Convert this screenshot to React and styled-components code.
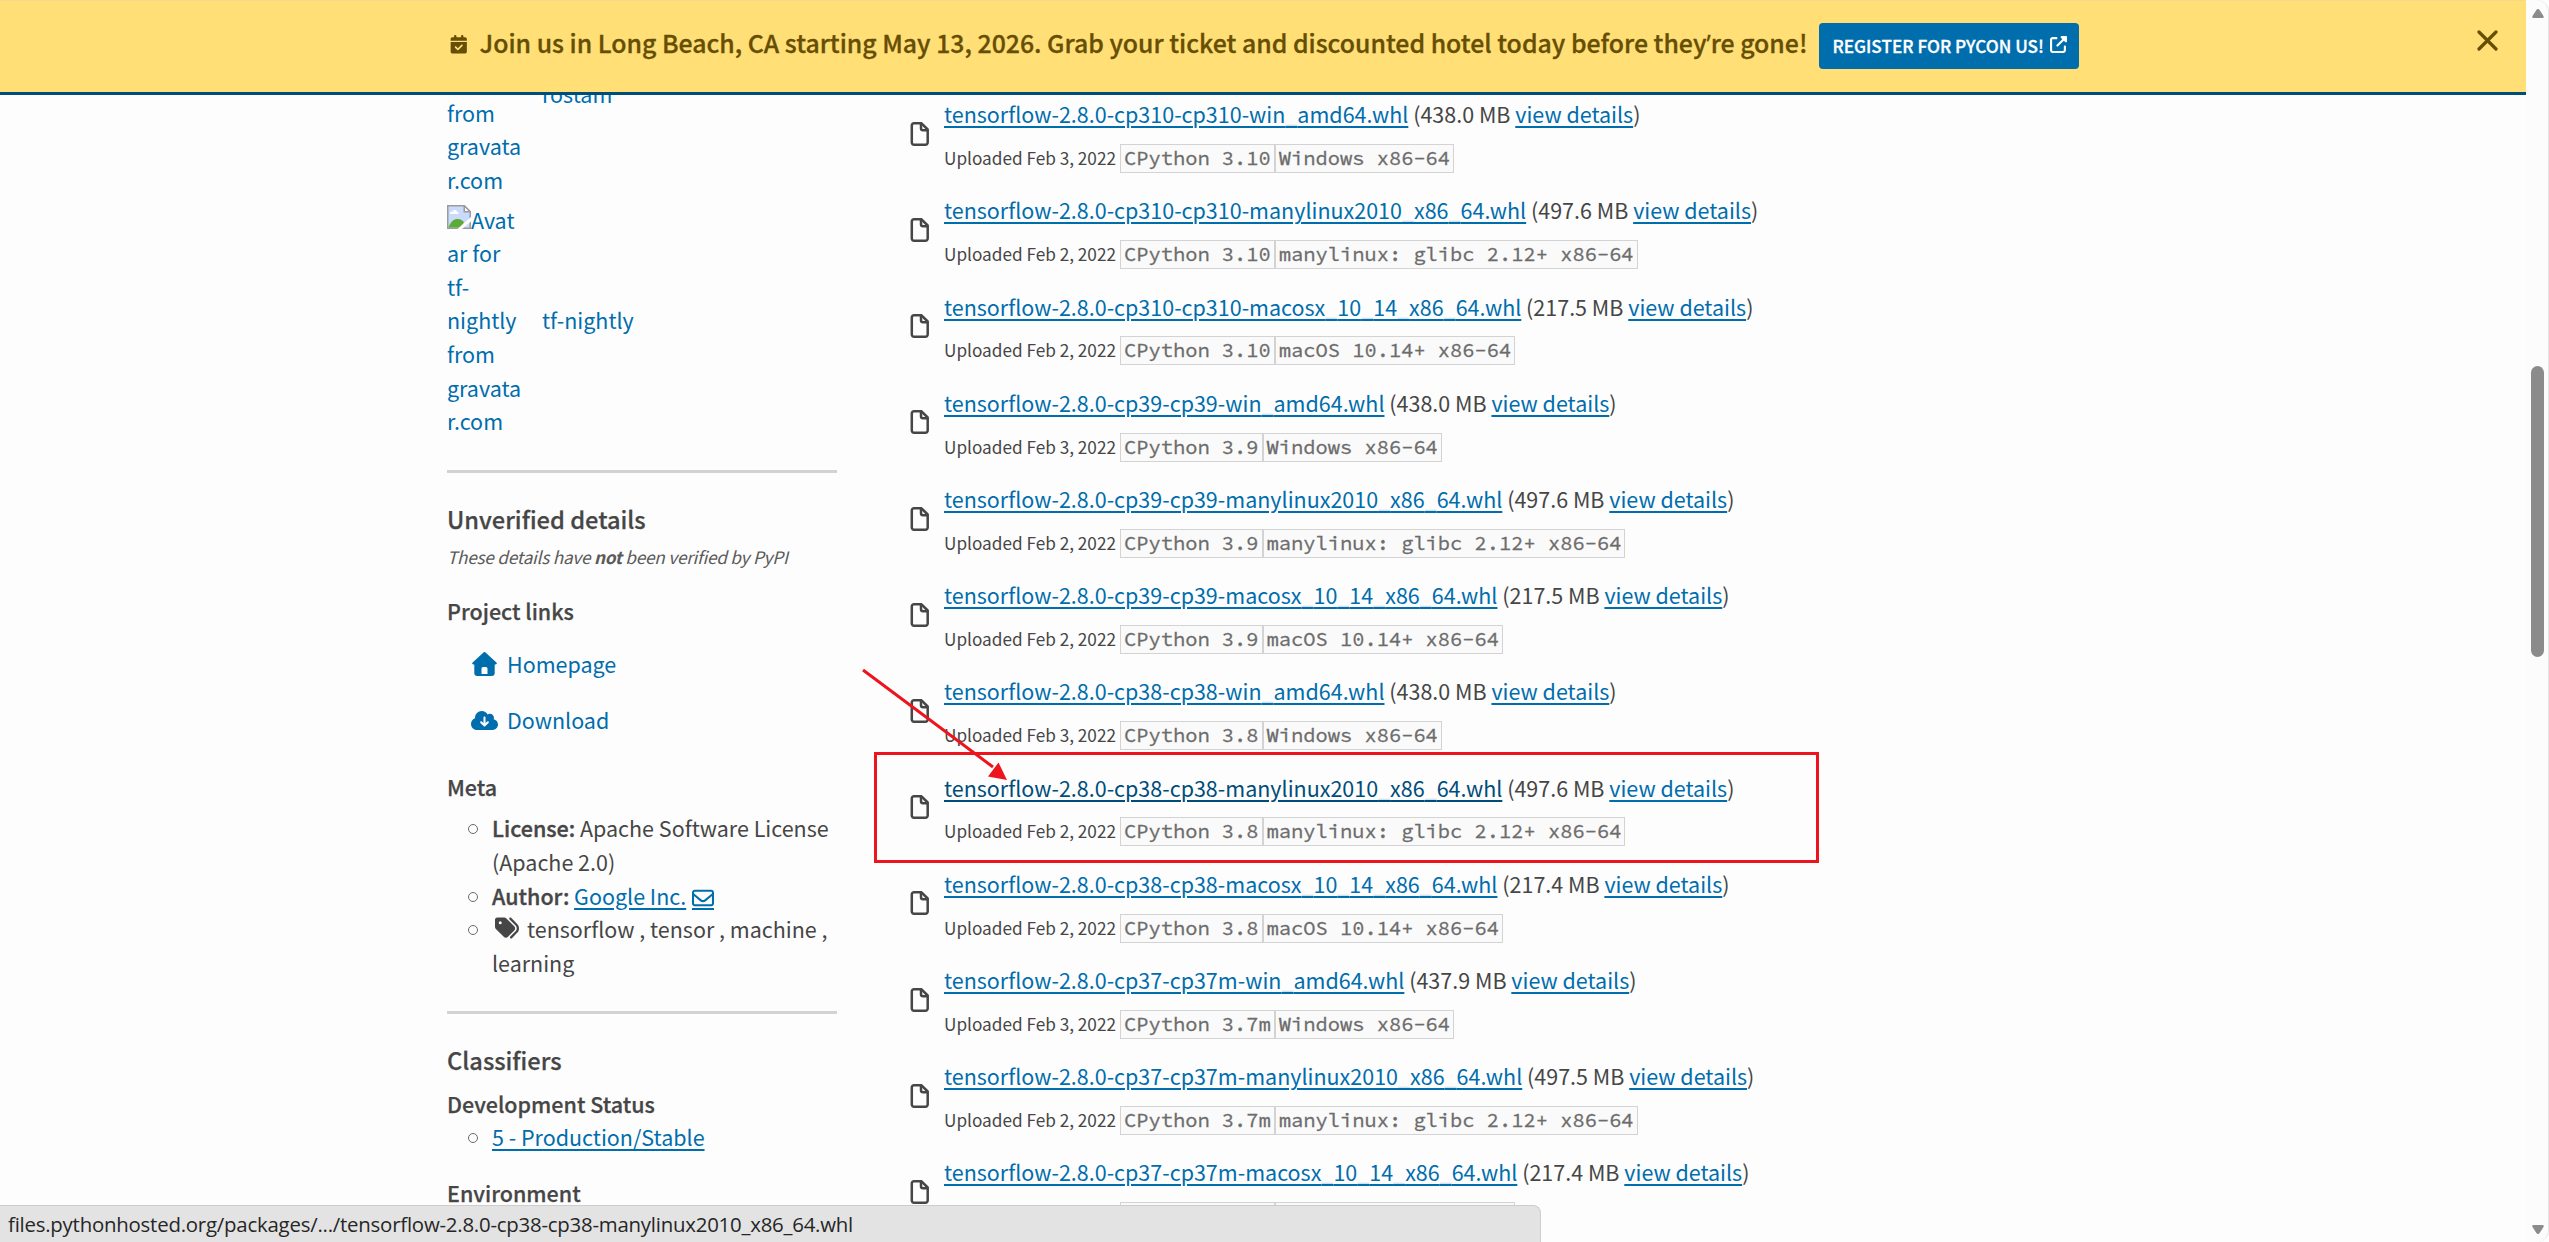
import React from 'react';
import styled, { createGlobalStyle } from 'styled-components';
import {
  FaCalendarCheck,
  FaUpRightFromSquare,
  FaCloudArrowDown,
  FaTags,
  FaRegEnvelope,
} from 'react-icons/fa6';

const sans = '"Noto Sans CJK SC", "Open Sans", sans-serif';
const mono = '"Source Code Pro", "Liberation Mono", monospace';
const blue = '#006dad';
const darkBlue = '#004d7a';
const ink = '#464646';

const Global = createGlobalStyle`
  *, *::before, *::after { box-sizing: border-box; }
  html, body { margin: 0; padding: 0; background: #fdfdfd; overflow: hidden; }
`;

const Browser = styled.div`
  position: relative;
  display: flex;
  width: 2549px;
  height: 1242px;
  overflow: hidden;
  background: #fdfdfd;
  color: ${ink};
  font-family: ${sans};
  font-size: 21.49px;
  line-height: 33.6px;
`;

const Page = styled.div`
  flex: 1;
  min-width: 0;
  display: flex;
  flex-direction: column;
`;

const Banner = styled.header`
  flex: none;
  height: 95px;
  padding: 0 28px 0 450px;
  display: flex;
  align-items: flex-start;
  background: #ffdf76;
  border-bottom: 3px solid ${darkBlue};
  box-shadow: inset 0 1px 0 #f3d98a;
  color: #664e04;
`;

const BannerIcon = styled.span`
  display: flex;
  margin: 35px 12px 0 0;
  font-size: 18.5px;
  svg { width: 17.5px; }
`;

const BannerText = styled.span`
  margin: 25px 12px 0 0;
  font-size: 24.84px;
  font-weight: 500;
  line-height: 34px;
  white-space: nowrap;
  -webkit-text-stroke: 0.3px currentColor;
`;

const Apostrophe = styled.span`
  font-family: "Open Sans", sans-serif;
`;

const BannerButton = styled.a`
  display: flex;
  align-items: center;
  gap: 6px;
  height: 46px;
  margin-top: 23px;
  padding: 0 12px 0 13px;
  border-radius: 4px;
  background: ${blue};
  color: #fff;
  font-size: 17.19px;
  font-weight: 500;
  white-space: nowrap;
  -webkit-text-stroke: 0.3px currentColor;
  svg { width: 17px; height: 17px; margin-top: -3px; }
`;

const CloseButton = styled.button`
  display: flex;
  margin: 30px 0 0 auto;
  padding: 0;
  border: 0;
  background: none;
  color: inherit;
`;

const Main = styled.main`
  flex: 1;
  min-height: 0;
  overflow: hidden;
  display: flex;
  align-items: flex-start;
  gap: 73px;
  padding-left: 447px;
`;

const Sidebar = styled.aside`
  flex: none;
  width: 390px;
  margin-top: -103.6px;
`;

const Maintainer = styled.div`
  display: flex;
  align-items: center;
  gap: 19px;
  height: ${p => p.$height}px;
  margin-bottom: ${p => p.$after}px;
  color: ${blue};
`;

const AltText = styled.div`
  width: 76px;
  align-self: flex-end;
  display: flex;
  flex-direction: column;
  white-space: nowrap;
`;

const AltLine = styled.span`
  display: flex;
  svg { flex: none; margin-top: 2px; }
`;

const Divider = styled.hr`
  height: 3px;
  margin: ${p => p.$before}px 0 29.8px;
  border: 0;
  background: #d3d3d3;
`;

const Heading = styled.h3`
  margin: 0 0 ${p => p.$after}px;
  font-size: 23.64px;
  font-weight: 500;
  line-height: 33.6px;
  -webkit-text-stroke: 0.25px currentColor;
`;

const SubHeading = styled.h4`
  margin: 0 0 ${p => p.$after}px;
  font-size: 21.49px;
  font-weight: 500;
  line-height: 33.6px;
  -webkit-text-stroke: 0.25px currentColor;
`;

const Note = styled.p`
  margin: 0 0 23.9px;
  font-size: 17.19px;
  font-style: italic;
  line-height: 26px;
  letter-spacing: -0.23px;
  color: #5a5a5a;
  white-space: nowrap;
`;

const ProjectLinks = styled.nav`
  display: flex;
  flex-direction: column;
  gap: 22.4px;
  margin-bottom: 33.4px;
`;

const ProjectLink = styled.a`
  display: flex;
  align-items: center;
  gap: 8.5px;
  padding-left: 24px;
  color: ${blue};
`;

const IconSlot = styled.span`
  display: flex;
  justify-content: center;
  width: 27.5px;
`;

const BulletList = styled.ul`
  margin: 0 0 ${p => p.$after}px;
  padding: 0;
  list-style: none;
`;

const BulletItem = styled.li`
  display: flex;
  padding-left: 21px;
  white-space: nowrap;
  &::before {
    content: '';
    flex: none;
    width: 10px;
    height: 10px;
    margin: 13px 14px 0 0;
    border: 1.4px solid #6a6a6a;
    border-radius: 50%;
  }
`;

const Strong = styled.strong`
  font-weight: 500;
  -webkit-text-stroke: 0.35px currentColor;
`;

const Link = styled.a`
  color: ${p => (p.$hovered ? darkBlue : blue)};
  text-decoration: underline;
  text-decoration-thickness: 2px;
  text-underline-offset: 2.5px;
`;

const Underscore = styled.span`
  color: #d3e2e8;
`;

const MailLink = styled.a`
  display: inline-block;
  margin-left: 6px;
  height: 21px;
  line-height: 0;
  vertical-align: -4px;
  border-bottom: 2px solid ${blue};
  color: ${blue};
  svg { width: 22px; height: 22px; margin-top: -2px; }
`;

const TagIcon = styled.span`
  display: inline-block;
  margin: 0 7px 0 2px;
  line-height: 0;
  vertical-align: -2px;
  svg { width: 26px; height: 24px; }
`;

const Files = styled.section`
  padding-top: 1.9px;
`;

const FileRow = styled.article`
  display: flex;
  align-items: center;
  gap: 14px;
  height: 75.6px;
  margin-bottom: 20.6px;
  white-space: nowrap;
  > svg { margin-bottom: 1.6px; }
`;

const FileMeta = styled.div`
  display: flex;
  align-items: baseline;
  margin-top: 12.2px;
  height: 29px;
  font-size: 17.19px;
  line-height: 29px;
`;

const Uploaded = styled.span`
  width: 176px;
`;

const Tag = styled.code`
  padding: 0 3px 1px;
  border: 1px solid #d3d3d3;
  background: #fafafa;
  color: #6c6c6c;
  font-family: ${mono};
  font-size: 20.4px;
  line-height: 26px;
  -webkit-text-stroke: 0.3px currentColor;
`;

const Scrollbar = styled.div`
  flex: none;
  width: 23px;
  padding: 9px 4px 8px 5px;
  display: flex;
  flex-direction: column;
  align-items: center;
  border-right: 1px solid #e4e4e4;
  border-radius: 0 12px 12px 0;
  background: #fcfcfc;
`;

const Thumb = styled.div`
  width: 13px;
  height: 291px;
  margin: 348px 0 auto;
  border-radius: 6.5px;
  background: #8b8b8b;
`;

const StatusBar = styled.div`
  position: absolute;
  left: 0;
  bottom: 0;
  width: 1541px;
  height: 37px;
  padding-left: 8px;
  border-top: 1px solid #cdcdcd;
  border-right: 1px solid #cdcdcd;
  border-top-right-radius: 8px;
  background: #e3e3e3;
  color: #262626;
  font-family: "Open Sans", sans-serif;
  font-size: 20.4px;
  letter-spacing: -0.22px;
  line-height: 37px;
  white-space: nowrap;
`;

const Highlight = styled.div`
  position: absolute;
  left: 874px;
  top: 752px;
  width: 945px;
  height: 111px;
  border: 3px solid #ed141d;
`;

const Arrow = styled.svg`
  position: absolute;
  left: 855px;
  top: 660px;
`;

const BrokenImage = () => (
  <svg width="24" height="24" viewBox="0 0 24 24">
    <path d="M.75.75h16.5l6 6v16.5H.75z" fill="#c9dafa" stroke="#9b9b9b" strokeWidth="1.5" />
    <path d="M3 8.5c0-2 2-2.2 2.6-1.6.5-2.4 4-2.4 4.5 0 1.5 0 1.9 1.6 1.4 2.1H3z" fill="#fff" />
    <path d="M1.5 22.5c2-6 5.5-8.5 9-8.5s5 1.5 6.5 3.5l-4 5z" fill="#5bab37" />
    <path d="M17.25.75v6h6z" fill="#fff" stroke="#9b9b9b" strokeWidth="1.5" />
    <path d="M10.5 24L24 12v4.5L15 24z" fill="#fdfdfd" />
  </svg>
);

const HouseIcon = () => (
  <svg width="25" height="24" viewBox="0 0 25 24" fill={blue}>
    <path
      fillRule="evenodd"
      d="M11.5.4a1.5 1.5 0 0 1 2 0l10.9 10c.9.9.3 2.1-.8 2.1h-.9v8.5a3 3 0 0 1-3 3H5.3a3 3 0 0 1-3-3v-8.5h-.9c-1.1 0-1.7-1.2-.8-2.1zM11 15a1.5 1.5 0 0 0-1.5 1.5V22h6v-5.5A1.5 1.5 0 0 0 14 15z"
    />
  </svg>
);

const FileIcon = () => (
  <svg width="20" height="24" viewBox="0 0 20 24" fill="none" stroke={ink} strokeWidth="2.5" strokeLinejoin="round">
    <path d="M4 1.3h7.5l6.2 6.2v13a2.2 2.2 0 0 1-2.2 2.2H4a2.2 2.2 0 0 1-2.2-2.2v-17A2.2 2.2 0 0 1 4 1.3z" />
    <path d="M11 1.8v4.5a2 2 0 0 0 2 2h4.3" />
  </svg>
);

const CloseIcon = () => (
  <svg width="21" height="21" viewBox="0 0 21 21" fill="none" stroke="currentColor" strokeWidth="3.2" strokeLinecap="round">
    <path d="M2 2l17 17M19 2L2 19" />
  </svg>
);

const files = [
  ['cp310-cp310-win_amd64', '438.0', 3, '3.10', 'Windows x86-64'],
  ['cp310-cp310-manylinux2010_x86_64', '497.6', 2, '3.10', 'manylinux: glibc 2.12+ x86-64'],
  ['cp310-cp310-macosx_10_14_x86_64', '217.5', 2, '3.10', 'macOS 10.14+ x86-64'],
  ['cp39-cp39-win_amd64', '438.0', 3, '3.9', 'Windows x86-64'],
  ['cp39-cp39-manylinux2010_x86_64', '497.6', 2, '3.9', 'manylinux: glibc 2.12+ x86-64'],
  ['cp39-cp39-macosx_10_14_x86_64', '217.5', 2, '3.9', 'macOS 10.14+ x86-64'],
  ['cp38-cp38-win_amd64', '438.0', 3, '3.8', 'Windows x86-64'],
  ['cp38-cp38-manylinux2010_x86_64', '497.6', 2, '3.8', 'manylinux: glibc 2.12+ x86-64', true],
  ['cp38-cp38-macosx_10_14_x86_64', '217.4', 2, '3.8', 'macOS 10.14+ x86-64'],
  ['cp37-cp37m-win_amd64', '437.9', 3, '3.7m', 'Windows x86-64'],
  ['cp37-cp37m-manylinux2010_x86_64', '497.5', 2, '3.7m', 'manylinux: glibc 2.12+ x86-64'],
  ['cp37-cp37m-macosx_10_14_x86_64', '217.4', 2, '3.7m', 'macOS 10.14+ x86-64'],
];

function FileName({ name }) {
  return name.split('_').map((part, i) => (
    <React.Fragment key={i}>
      {i > 0 && <Underscore>_</Underscore>}
      {part}
    </React.Fragment>
  ));
}

function File({ build, size, day, python, platform, hovered }) {
  return (
    <FileRow>
      <FileIcon />
      <div>
        <div>
          <Link $hovered={hovered}><FileName name={`tensorflow-2.8.0-${build}.whl`} /></Link>
          {` (${size} MB `}
          <Link>view details</Link>)
        </div>
        <FileMeta>
          <Uploaded>{`Uploaded Feb ${day}, 2022`}</Uploaded>
          <Tag>{`CPython ${python}`}</Tag>
          <Tag>{platform}</Tag>
        </FileMeta>
      </div>
    </FileRow>
  );
}

export default function App() {
  return (
    <Browser>
      <Global />
      <Page>
        <Banner>
          <BannerIcon><FaCalendarCheck /></BannerIcon>
          <BannerText>
            Join us in Long Beach, CA starting May 13, 2026. Grab your ticket and discounted hotel today before they
            <Apostrophe>’</Apostrophe>re gone!
          </BannerText>
          <BannerButton>REGISTER FOR PYCON US!<FaUpRightFromSquare /></BannerButton>
          <CloseButton><CloseIcon /></CloseButton>
        </Banner>
        <Main>
          <Sidebar>
            <Maintainer $height={205} $after={6.2}>
              <AltText>
                <AltLine>from</AltLine>
                <AltLine>gravata</AltLine>
                <AltLine>r.com</AltLine>
              </AltText>
              <span>rostam</span>
            </Maintainer>
            <Maintainer $height={235.2} $after={0}>
              <AltText>
                <AltLine><BrokenImage />Avat</AltLine>
                <AltLine>ar for</AltLine>
                <AltLine>tf-</AltLine>
                <AltLine>nightly</AltLine>
                <AltLine>from</AltLine>
                <AltLine>gravata</AltLine>
                <AltLine>r.com</AltLine>
              </AltText>
              <span>tf-nightly</span>
            </Maintainer>

            <Divider $before={32.2} />
            <Heading $after={7.6}>Unverified details</Heading>
            <Note>These details have <b>not</b> been verified by PyPI</Note>
            <SubHeading $after={19.8}>Project links</SubHeading>
            <ProjectLinks>
              <ProjectLink><IconSlot><HouseIcon /></IconSlot>Homepage</ProjectLink>
              <ProjectLink><IconSlot><FaCloudArrowDown size={27} /></IconSlot>Download</ProjectLink>
            </ProjectLinks>
            <SubHeading $after={7.7}>Meta</SubHeading>
            <BulletList $after={31.4}>
              <BulletItem>
                <div><Strong>License:</Strong> Apache Software License<br />(Apache 2.0)</div>
              </BulletItem>
              <BulletItem>
                <div>
                  <Strong>Author:</Strong> <Link>Google Inc.</Link>
                  <MailLink><FaRegEnvelope /></MailLink>
                </div>
              </BulletItem>
              <BulletItem>
                <div><TagIcon><FaTags /></TagIcon>tensorflow , tensor , machine ,<br />learning</div>
              </BulletItem>
            </BulletList>

            <Divider $before={0} />
            <Heading $after={10.2}>Classifiers</Heading>
            <SubHeading $after={-1.1}>Development Status</SubHeading>
            <BulletList $after={22.3}>
              <BulletItem><Link>5 - Production/Stable</Link></BulletItem>
            </BulletList>
            <SubHeading $after={0}>Environment</SubHeading>
          </Sidebar>

          <Files>
            {files.map(([build, size, day, python, platform, hovered]) => (
              <File key={build} {...{ build, size, day, python, platform, hovered }} />
            ))}
          </Files>
        </Main>
      </Page>

      <Scrollbar>
        <svg width="12" height="9" viewBox="0 0 12 9" fill="#8b8b8b"><path d="M6 0q1 0 1.6 1L11.5 7q.8 2-1 2h-9q-1.8 0-1-2L4.4 1Q5 0 6 0z" /></svg>
        <Thumb />
        <svg width="12" height="9" viewBox="0 0 12 9" fill="#8b8b8b"><path d="M6 9q-1 0-1.6-1L.5 2q-.8-2 1-2h9q1.8 0 1 2L7.6 8Q7 9 6 9z" /></svg>
      </Scrollbar>

      <StatusBar>files.pythonhosted.org/packages/.../tensorflow-2.8.0-cp38-cp38-manylinux2010_x86_64.whl</StatusBar>
      <Highlight />
      <Arrow width="160" height="130" viewBox="0 0 160 130">
        <path d="M8 10L138 107" stroke="#ed141d" strokeWidth="3" />
        <path d="M152 120l-19-3.5L143.5 102.5z" fill="#ed141d" />
      </Arrow>
    </Browser>
  );
}
